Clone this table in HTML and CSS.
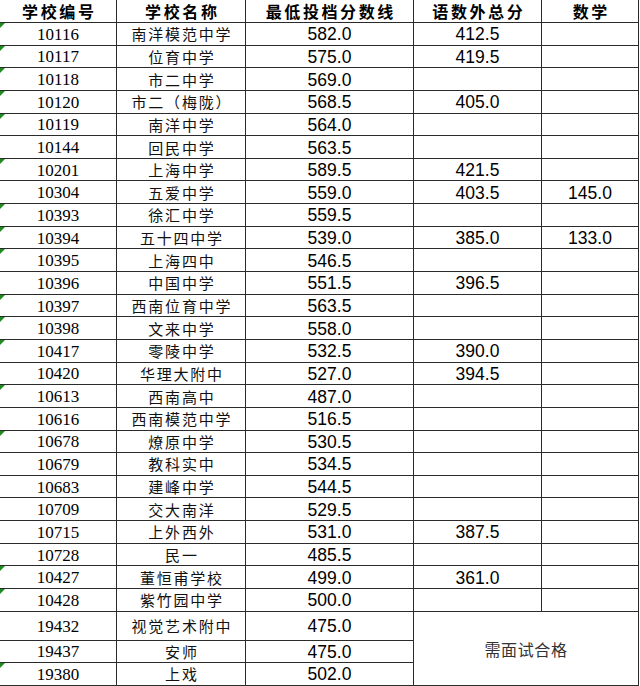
FILE: index.html
```html
<!DOCTYPE html>
<html lang="zh-CN">
<head>
<meta charset="utf-8">
<title>学校分数线</title>
<link rel="stylesheet" href="styles.css">
</head>
<body>
<table class="sheet">
  <colgroup>
    <col class="c1"><col class="c2"><col class="c3"><col class="c4"><col class="c5">
  </colgroup>
  <thead>
    <tr class="head">
      <th>学校编号</th><th>学校名称</th><th>最低投档分数线</th><th>语数外总分</th><th>数学</th>
    </tr>
  </thead>
  <tbody>
    <tr><td class="code flag">10116</td><td class="name">南洋模范中学</td><td class="num">582.0</td><td class="num">412.5</td><td class="num"></td></tr>
    <tr><td class="code flag">10117</td><td class="name">位育中学</td><td class="num">575.0</td><td class="num">419.5</td><td class="num"></td></tr>
    <tr><td class="code flag">10118</td><td class="name">市二中学</td><td class="num">569.0</td><td class="num"></td><td class="num"></td></tr>
    <tr><td class="code flag">10120</td><td class="name">市二（梅陇）</td><td class="num">568.5</td><td class="num">405.0</td><td class="num"></td></tr>
    <tr><td class="code flag">10119</td><td class="name">南洋中学</td><td class="num">564.0</td><td class="num"></td><td class="num"></td></tr>
    <tr><td class="code">10144</td><td class="name">回民中学</td><td class="num">563.5</td><td class="num"></td><td class="num"></td></tr>
    <tr><td class="code flag">10201</td><td class="name">上海中学</td><td class="num">589.5</td><td class="num">421.5</td><td class="num"></td></tr>
    <tr><td class="code">10304</td><td class="name">五爱中学</td><td class="num">559.0</td><td class="num">403.5</td><td class="num">145.0</td></tr>
    <tr><td class="code flag">10393</td><td class="name">徐汇中学</td><td class="num">559.5</td><td class="num"></td><td class="num"></td></tr>
    <tr><td class="code flag">10394</td><td class="name">五十四中学</td><td class="num">539.0</td><td class="num">385.0</td><td class="num">133.0</td></tr>
    <tr><td class="code flag">10395</td><td class="name">上海四中</td><td class="num">546.5</td><td class="num"></td><td class="num"></td></tr>
    <tr><td class="code">10396</td><td class="name">中国中学</td><td class="num">551.5</td><td class="num">396.5</td><td class="num"></td></tr>
    <tr><td class="code flag">10397</td><td class="name">西南位育中学</td><td class="num">563.5</td><td class="num"></td><td class="num"></td></tr>
    <tr><td class="code flag">10398</td><td class="name">文来中学</td><td class="num">558.0</td><td class="num"></td><td class="num"></td></tr>
    <tr><td class="code flag">10417</td><td class="name">零陵中学</td><td class="num">532.5</td><td class="num">390.0</td><td class="num"></td></tr>
    <tr><td class="code">10420</td><td class="name">华理大附中</td><td class="num">527.0</td><td class="num">394.5</td><td class="num"></td></tr>
    <tr><td class="code flag">10613</td><td class="name">西南高中</td><td class="num">487.0</td><td class="num"></td><td class="num"></td></tr>
    <tr><td class="code">10616</td><td class="name">西南模范中学</td><td class="num">516.5</td><td class="num"></td><td class="num"></td></tr>
    <tr><td class="code flag">10678</td><td class="name">燎原中学</td><td class="num">530.5</td><td class="num"></td><td class="num"></td></tr>
    <tr><td class="code">10679</td><td class="name">教科实中</td><td class="num">534.5</td><td class="num"></td><td class="num"></td></tr>
    <tr><td class="code">10683</td><td class="name">建峰中学</td><td class="num">544.5</td><td class="num"></td><td class="num"></td></tr>
    <tr><td class="code">10709</td><td class="name">交大南洋</td><td class="num">529.5</td><td class="num"></td><td class="num"></td></tr>
    <tr><td class="code">10715</td><td class="name">上外西外</td><td class="num">531.0</td><td class="num">387.5</td><td class="num"></td></tr>
    <tr><td class="code">10728</td><td class="name">民一</td><td class="num">485.5</td><td class="num"></td><td class="num"></td></tr>
    <tr><td class="code flag">10427</td><td class="name">董恒甫学校</td><td class="num">499.0</td><td class="num">361.0</td><td class="num"></td></tr>
    <tr><td class="code flag">10428</td><td class="name">紫竹园中学</td><td class="num">500.0</td><td class="num"></td><td class="num"></td></tr>
    <tr class="tall"><td class="code">19432</td><td class="name">视觉艺术附中</td><td class="num">475.0</td><td class="note" colspan="2" rowspan="3">需面试合格</td></tr>
    <tr class="end"><td class="code">19437</td><td class="name">安师</td><td class="num">475.0</td></tr>
    <tr class="end"><td class="code flag">19380</td><td class="name">上戏</td><td class="num">502.0</td></tr>
  </tbody>
</table>
</body>
</html>
```

FILE: styles.css
```css
html, body {
  margin: 0;
  padding: 0;
  background: #ffffff;
}

.sheet {
  table-layout: fixed;
  border-collapse: separate;
  border-spacing: 0;
  width: 639px;
  color: #000;
}

.c1 { width: 117px; }
.c2 { width: 129px; }
.c3 { width: 168px; }
.c4 { width: 128px; }
.c5 { width: 97px; }

.sheet th,
.sheet td {
  box-sizing: border-box;
  border-right: 1px solid #2b2b2b;
  border-bottom: 1px solid #2b2b2b;
  padding: 0;
  text-align: center;
  vertical-align: middle;
  white-space: nowrap;
  overflow: hidden;
}

.head {
  height: 23px;
}

.head th {
  font-family: "Noto Sans CJK SC", "Noto Sans", sans-serif;
  font-weight: 700;
  font-size: 16px;
  letter-spacing: 2.6px;
  text-indent: 2.6px;
  line-height: 18px;
}

tbody tr {
  height: 22.65px;
}

tbody tr.tall {
  height: 29px;
}

tbody tr.end {
  height: 22.5px;
}

.code {
  position: relative;
  font-family: "Liberation Serif", serif;
  font-size: 17px;
  line-height: 18px;
  padding-top: 2px !important;
}

.flag::before {
  content: "";
  position: absolute;
  left: 0;
  top: 0;
  width: 0;
  height: 0;
  border-top: 5px solid #1f8c21;
  border-right: 5px solid transparent;
}

.name {
  font-family: "Noto Sans CJK SC", sans-serif;
  font-weight: 400;
  font-size: 15px;
  letter-spacing: 1.8px;
  text-indent: 1.8px;
  line-height: 18px;
  color: #111;
  padding-top: 1px !important;
}

.num {
  font-family: "Liberation Sans", Arial, sans-serif;
  font-size: 17.5px;
  line-height: 18px;
  padding-top: 1px !important;
}

.note {
  font-family: "Noto Sans CJK SC", sans-serif;
  font-size: 16px;
  letter-spacing: 0.6px;
  color: #333;
  padding-top: 2px !important;
}
```
